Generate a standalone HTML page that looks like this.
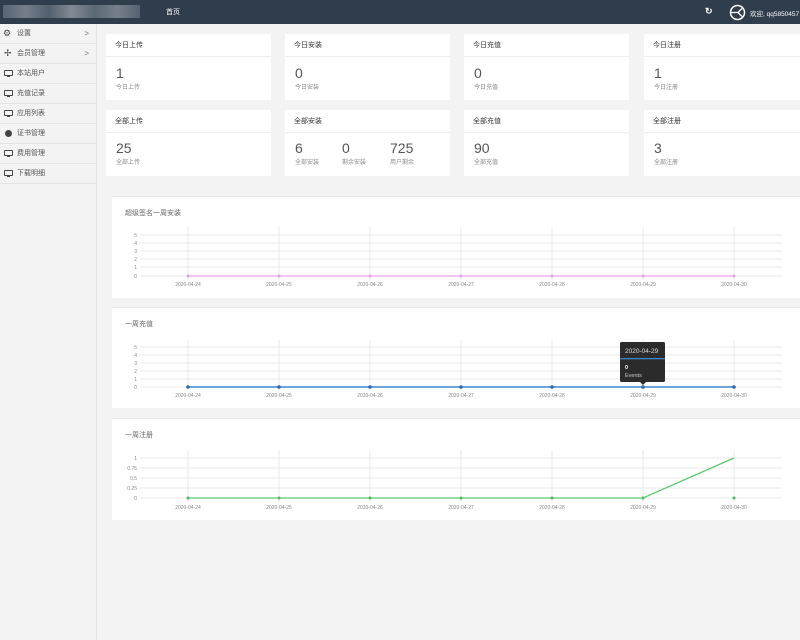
<!DOCTYPE html>
<html><head><meta charset="utf-8"><style>
*{margin:0;padding:0;box-sizing:border-box}
body{width:800px;height:640px;overflow:hidden;background:#f3f3f4;font-family:"Liberation Sans","Noto Sans CJK SC",sans-serif;position:relative;color:#676a6c}
.hdr{position:absolute;left:0;top:0;width:800px;height:24px;background:#2f3d4c}
.blur{position:absolute;left:3px;top:5px;width:137px;height:13px;background:linear-gradient(90deg,#5d6977,#7b8691,#56626f,#8a939d,#606c79,#7c8791,#5a6673);opacity:.9}
.side{position:absolute;left:0;top:24px;width:97px;height:616px;background:#f3f3f4;border-right:1px solid #e2e2e2}
.it{height:20px;border-bottom:1px solid #e4e4e4;font-size:7px;line-height:19px;padding-left:17px;position:relative;color:#555}
.it i{position:absolute;left:4px;top:6px;width:9px;height:6px;border:1.3px solid #444;border-radius:1px}
.it i:after{content:"";position:absolute;left:2px;top:5px;width:3px;height:1.3px;background:#444}
.it b{position:absolute;right:7px;top:0;font-weight:normal;font-size:8px;color:#777}
.card{position:absolute;background:#fff}
.card .h{height:23px;border-bottom:1px solid #eee;font-size:7px;line-height:23px;padding-left:9px;color:#333}
.num{position:absolute;font-size:14px;color:#555}
.lb{position:absolute;font-size:6px;color:#888}
.pan{position:absolute;left:112px;width:688px;background:#fff;border-top:1px solid #e6e6e6}
.pt{position:absolute;left:13px;font-size:7px;color:#666}
</style></head><body>
<div class="hdr"><div class="blur"></div>
<div style="position:absolute;left:166px;top:7px;font-size:7px;color:#fff">首页</div>
<div style="position:absolute;left:705px;top:6px;font-size:9px;color:#fff;font-weight:bold">↻</div>
<svg style="position:absolute;left:729px;top:4px" width="17" height="17" viewBox="0 0 17 17"><circle cx="8.5" cy="8.5" r="7" fill="none" stroke="#fff" stroke-width="1.5"/><path d="M2 8.5h7l4-4M9 8.5l4 4" stroke="#fff" stroke-width="1.3" fill="none"/></svg>
<div style="position:absolute;left:750px;top:8px;font-size:6.5px;color:#fff;white-space:nowrap">欢迎, qq5850457 ▾</div>
</div>
<div class="side">
<div class="it"><span style="position:absolute;left:3px;top:0;font-size:9px;color:#444">⚙</span>设置<b>&gt;</b></div>
<div class="it"><span style="position:absolute;left:4px;top:0;font-size:9px;color:#444">✢</span>会员管理<b>&gt;</b></div>
<div class="it"><i></i>本站用户</div>
<div class="it"><i></i>充值记录</div>
<div class="it"><i></i>应用列表</div>
<div class="it"><span style="position:absolute;left:5px;top:6px;width:7px;height:7px;border-radius:50%;background:#444"></span>证书管理</div>
<div class="it"><i></i>费用管理</div>
<div class="it"><i></i>下载明细</div>
</div>

<div class="card" style="left:106px;top:34px;width:165px;height:66px"><div class="h">今日上传</div><div class="num" style="left:10px;top:31px">1</div><div class="lb" style="left:10px;top:48px">今日上传</div></div>
<div class="card" style="left:285px;top:34px;width:165px;height:66px"><div class="h">今日安装</div><div class="num" style="left:10px;top:31px">0</div><div class="lb" style="left:10px;top:48px">今日安装</div></div>
<div class="card" style="left:464px;top:34px;width:165px;height:66px"><div class="h">今日充值</div><div class="num" style="left:10px;top:31px">0</div><div class="lb" style="left:10px;top:48px">今日充值</div></div>
<div class="card" style="left:644px;top:34px;width:156px;height:66px"><div class="h">今日注册</div><div class="num" style="left:10px;top:31px">1</div><div class="lb" style="left:10px;top:48px">今日注册</div></div>

<div class="card" style="left:106px;top:110px;width:165px;height:66px"><div class="h">全部上传</div><div class="num" style="left:10px;top:30px">25</div><div class="lb" style="left:10px;top:47px">全部上传</div></div>
<div class="card" style="left:285px;top:110px;width:165px;height:66px"><div class="h">全部安装</div><div class="num" style="left:10px;top:30px">6</div><div class="lb" style="left:10px;top:47px">全部安装</div><div class="num" style="left:57px;top:30px">0</div><div class="lb" style="left:57px;top:47px">剩余安装</div><div class="num" style="left:105px;top:30px">725</div><div class="lb" style="left:105px;top:47px">用户剩余</div></div>
<div class="card" style="left:464px;top:110px;width:165px;height:66px"><div class="h">全部充值</div><div class="num" style="left:10px;top:30px">90</div><div class="lb" style="left:10px;top:47px">全部充值</div></div>
<div class="card" style="left:644px;top:110px;width:156px;height:66px"><div class="h">全部注册</div><div class="num" style="left:10px;top:30px">3</div><div class="lb" style="left:10px;top:47px">全部注册</div></div>

<div class="pan" style="top:196px;height:102px"><div class="pt" style="top:11px">超级签名一周安装</div></div>
<div class="pan" style="top:307px;height:101px"><div class="pt" style="top:11px">一周充值</div></div>
<div class="pan" style="top:418px;height:102px"><div class="pt" style="top:11px">一周注册</div></div>

<svg style="position:absolute;left:0;top:0" width="800" height="640" font-family="Liberation Sans" font-size="5" fill="#888">
<g stroke="#e8e8e8" stroke-width="1">
<path d="M140 235H782M140 243H782M140 251H782M140 259H782M140 267H782M140 276H782"/>
<path d="M188 227V280M279 227V280M370 227V280M461 227V280M552 227V280M643 227V280M734 227V280"/>
<path d="M140 347H782M140 355H782M140 363H782M140 371H782M140 379H782M140 387H782"/>
<path d="M188 340V391M279 340V391M370 340V391M461 340V391M552 340V391M643 340V391M734 340V391"/>
<path d="M140 458H782M140 468H782M140 478H782M140 488H782M140 498H782"/>
<path d="M188 450V502M279 450V502M370 450V502M461 450V502M552 450V502M643 450V502M734 450V502"/>
</g>
<g text-anchor="end">
<text x="137" y="237">5</text><text x="137" y="245">4</text><text x="137" y="253">3</text><text x="137" y="261">2</text><text x="137" y="269">1</text><text x="137" y="278">0</text>
<text x="137" y="349">5</text><text x="137" y="357">4</text><text x="137" y="365">3</text><text x="137" y="373">2</text><text x="137" y="381">1</text><text x="137" y="389">0</text>
<text x="137" y="460">1</text><text x="137" y="470">0.75</text><text x="137" y="480">0.5</text><text x="137" y="490">0.25</text><text x="137" y="500">0</text>
</g>
<g text-anchor="middle">
<text x="188" y="286">2020-04-24</text><text x="279" y="286">2020-04-25</text><text x="370" y="286">2020-04-26</text><text x="461" y="286">2020-04-27</text><text x="552" y="286">2020-04-28</text><text x="643" y="286">2020-04-29</text><text x="734" y="286">2020-04-30</text>
<text x="188" y="397">2020-04-24</text><text x="279" y="397">2020-04-25</text><text x="370" y="397">2020-04-26</text><text x="461" y="397">2020-04-27</text><text x="552" y="397">2020-04-28</text><text x="643" y="397">2020-04-29</text><text x="734" y="397">2020-04-30</text>
<text x="188" y="509">2020-04-24</text><text x="279" y="509">2020-04-25</text><text x="370" y="509">2020-04-26</text><text x="461" y="509">2020-04-27</text><text x="552" y="509">2020-04-28</text><text x="643" y="509">2020-04-29</text><text x="734" y="509">2020-04-30</text>
</g>
<path d="M188 276H734" stroke="#eeb0e6" stroke-width="1.5"/>
<g fill="#e9a0e0"><circle cx="188" cy="276" r="1.5"/><circle cx="279" cy="276" r="1.5"/><circle cx="370" cy="276" r="1.5"/><circle cx="461" cy="276" r="1.5"/><circle cx="552" cy="276" r="1.5"/><circle cx="643" cy="276" r="1.5"/><circle cx="734" cy="276" r="1.5"/></g>
<path d="M188 387H734" stroke="#3b87cf" stroke-width="1.5"/>
<g fill="#2a6db0"><circle cx="188" cy="387" r="1.8"/><circle cx="279" cy="387" r="1.8"/><circle cx="370" cy="387" r="1.8"/><circle cx="461" cy="387" r="1.8"/><circle cx="552" cy="387" r="1.8"/><circle cx="643" cy="387" r="1.8"/><circle cx="734" cy="387" r="1.8"/></g>
<path d="M188 498H643L734 458" stroke="#5ccb6e" stroke-width="1.3" fill="none"/>
<g fill="#4cbb5e"><circle cx="188" cy="498" r="1.5"/><circle cx="279" cy="498" r="1.5"/><circle cx="370" cy="498" r="1.5"/><circle cx="461" cy="498" r="1.5"/><circle cx="552" cy="498" r="1.5"/><circle cx="643" cy="498" r="1.5"/><circle cx="734" cy="498" r="1.5"/></g>
<rect x="620" y="342" width="45" height="40" rx="1.5" fill="#2b2b2b"/>
<path d="M640 382l3 3 3-3z" fill="#2b2b2b"/>
<rect x="620" y="358" width="45" height="1.3" fill="#3b87cf"/>
<text x="625" y="353" font-size="6.5" fill="#ddd">2020-04-29</text>
<text x="625" y="369" font-size="5.5" fill="#fff" font-weight="bold">0</text>
<text x="625" y="377" font-size="5.5" fill="#ccc">Events</text>
</svg>
</body></html>
